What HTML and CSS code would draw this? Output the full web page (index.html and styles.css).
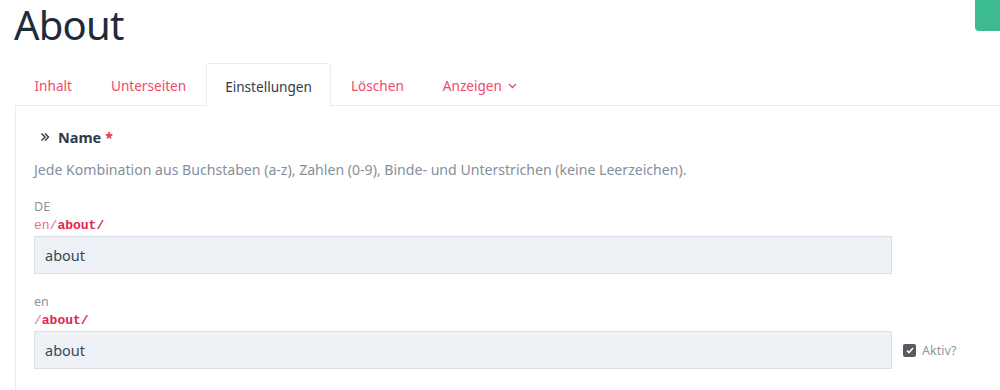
FILE: index.html
```html
<!DOCTYPE html>
<html lang="de">
<head>
<meta charset="utf-8">
<title>About</title>
<link rel="stylesheet" href="styles.css">
</head>
<body>
<div class="page">
  <h1 class="title">About</h1>
  <a class="action-btn" href="#" aria-label="Speichern"></a>
  <ul class="tabs">
    <li class="tab"><a href="#">Inhalt</a></li>
    <li class="tab"><a href="#">Unterseiten</a></li>
    <li class="tab active"><a href="#">Einstellungen</a></li>
    <li class="tab"><a href="#">Löschen</a></li>
    <li class="tab"><a href="#">Anzeigen <svg class="chev" width="9" height="6" viewBox="0 0 9 6"><path d="M1 1l3.5 3.5L8 1" fill="none" stroke="currentColor" stroke-width="1.3"/></svg></a></li>
  </ul>
  <div class="panel">
    <div class="field-head">
      <svg class="dbl" width="10" height="10" viewBox="0 0 10 10"><path d="M1.5 1.5L5 5l-3.5 3.5M5 1.5L8.5 5 5 8.5" fill="none" stroke="#3b4656" stroke-width="1.5"/></svg>
      <span class="field-name">Name</span><span class="req">*</span>
    </div>
    <p class="help">Jede Kombination aus Buchstaben (a-z), Zahlen (0-9), Binde- und Unterstrichen (keine Leerzeichen).</p>
    <div class="lang">
      <div class="lang-label">DE</div>
      <div class="url">en/<b>about/</b></div>
      <div class="row"><div class="input">about</div></div>
    </div>
    <div class="lang">
      <div class="lang-label">en</div>
      <div class="url">/<b>about/</b></div>
      <div class="row">
        <div class="input">about</div>
        <label class="check"><span class="box"><svg width="8" height="7" viewBox="0 0 8 7"><path d="M1 3.5l2 2L7 1" fill="none" stroke="#fff" stroke-width="1.6"/></svg></span>Aktiv?</label>
      </div>
    </div>
  </div>
</div>
</body>
</html>
```
FILE: styles.css
```css
* { box-sizing: border-box; }
body {
  margin: 0;
  font-family: "Noto Sans", "Open Sans", sans-serif;
  color: #3b4656;
  background: #fff;
}
.page { position: relative; }
.title {
  margin: 0;
  padding: 1px 0 0 14px;
  font-size: 40px;
  font-weight: 400;
  line-height: 48px;
  color: #1f2b3a;
  letter-spacing: -0.8px;
}
.action-btn {
  position: absolute;
  top: 0;
  right: 0;
  width: 25px;
  height: 31px;
  background: #3dbb93;
  border-bottom-left-radius: 4px;
}
.tabs {
  list-style: none;
  margin: 14px 0 0 15px;
  padding: 0;
  display: flex;
  border-bottom: 1px solid #e8ecf1;
  height: 43px;
}
.tab a {
  display: flex;
  align-items: center;
  gap: 6px;
  height: 43px;
  padding: 2px 18.5px 0;
  font-size: 13.6px;
  color: #f04a6b;
  text-decoration: none;
  border: 1px solid transparent;
  border-radius: 4px 4px 0 0;
}
.tab.active a {
  color: #333c48;
  border-color: #e8ecf1;
  border-bottom-color: #fff;
  height: 44px;
  background: #fff;
}
.chev { margin-top: 1px; }
.panel {
  margin-left: 15px;
  border-left: 1px solid #e8ecf1;
  padding: 20px 18px 20px 18px;
  height: 290px;
}
.field-head {
  display: flex;
  align-items: center;
  height: 22px;
}
.dbl { margin-left: 6px; margin-right: 8px; }
.field-name { font-weight: 700; font-size: 14.5px; color: #2e3a4a; }
.req { color: #e8334f; font-weight: 700; margin-left: 4px; font-size: 14px; }
.help {
  margin: 12px 0 0;
  font-size: 14.1px;
  line-height: 20px;
  color: #858f9b;
}
.lang { margin-top: 17px; }
.lang + .lang { margin-top: 18px; }
.lang-label { font-size: 12.5px; color: #8a939e; line-height: 19px; }
.url {
  font-family: "Liberation Mono", monospace;
  font-size: 13px;
  color: #e8708a;
  line-height: 20px;
}
.url b { color: #e0234d; }
.row { display: flex; align-items: center; }
.input {
  width: 858px;
  height: 38px;
  background: #eef2f7;
  border: 1px solid #d8dfe8;
  padding: 0 10px;
  display: flex;
  align-items: center;
  font-size: 14.5px;
  color: #3b4656;
}
.check {
  display: flex;
  align-items: center;
  gap: 6px;
  margin-left: 11px;
  font-size: 12.5px;
  color: #8e97a3;
}
.box {
  width: 13px;
  height: 13px;
  border-radius: 2px;
  background: #555b63;
  display: flex;
  align-items: center;
  justify-content: center;
}
```
